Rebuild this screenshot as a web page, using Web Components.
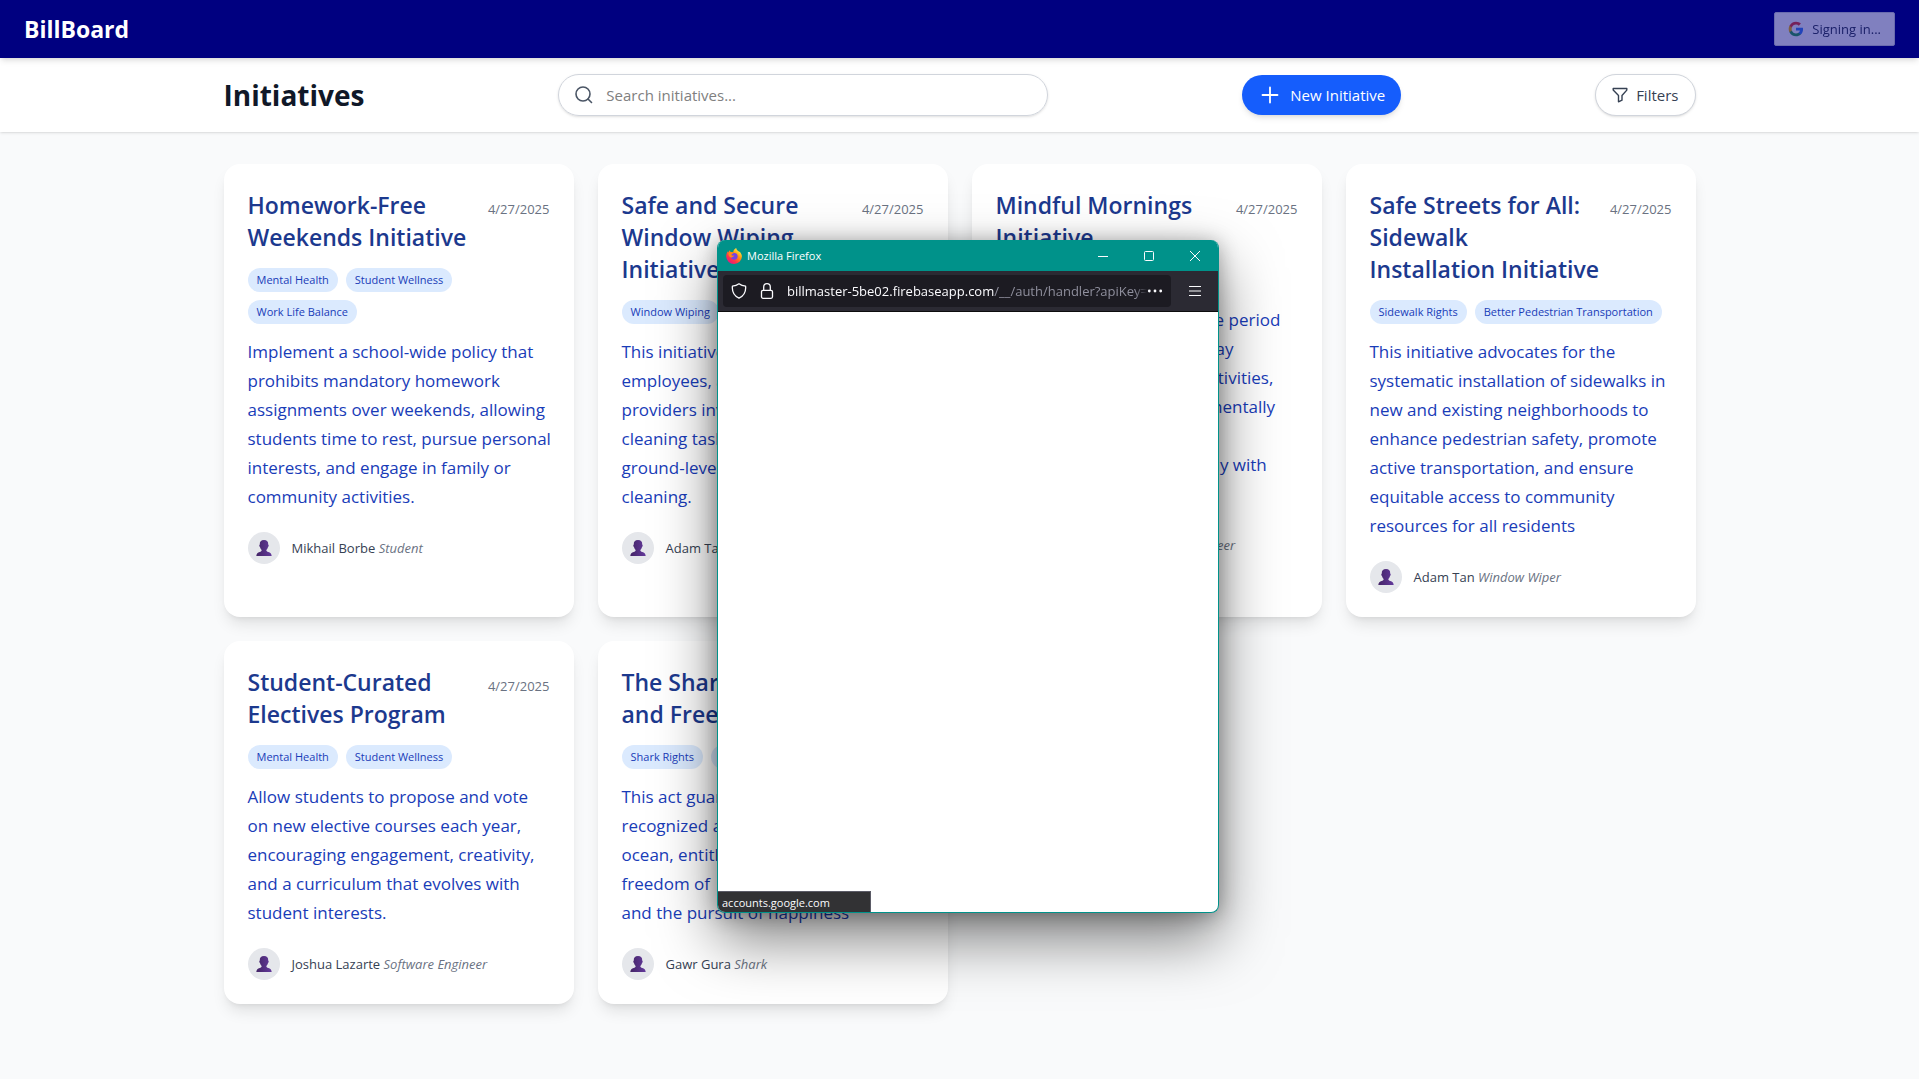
<!DOCTYPE html>
<html lang="en">
<head>
    <meta charset="UTF-8">
    <meta name="viewport" content="width=device-width, initial-scale=1.0">
    <title>BillBoard</title>
    <style>
        body {
            margin: 0;
            min-height: 100vh;
            background-color: #f9fafb;
            font-family: "Open Sans", "Noto Sans", sans-serif;
            color: #101828;
        }
    </style>
</head>
<body>
    <bb-header></bb-header>
    <bb-toolbar heading="Initiatives"></bb-toolbar>

    <bb-board>
        <bb-card date="4/27/2025" author="Mikhail Borbe" role-name="Student">
            <span slot="title">Homework-Free Weekends Initiative</span>
            <bb-tag slot="tags">Mental Health</bb-tag>
            <bb-tag slot="tags">Student Wellness</bb-tag>
            <bb-tag slot="tags">Work Life Balance</bb-tag>
            Implement a school-wide policy that prohibits mandatory homework assignments over weekends, allowing students time to rest, pursue personal interests, and engage in family or<br>community activities.
        </bb-card>
        <bb-card date="4/27/2025" author="Adam Tan" role-name="Window Wiper">
            <span slot="title">Safe and Secure Window Wiping Initiative</span>
            <bb-tag slot="tags">Window Wiping</bb-tag>
            This initiative protects all<br>employees, and service<br>providers involved in window<br>cleaning tasks, from high to<br>ground-level window<br>cleaning.
        </bb-card>
        <bb-card date="4/27/2025" author="Joshua Lazarte" role-name="Software Engineer">
            <span slot="title">Mindful Mornings Initiative</span>
            <bb-tag slot="tags">Mental Health</bb-tag>
            Begin with a short, quiet free period<br>at the start of each school day<br>for mindful and reflective activities,<br>helping students recharge mentally<br>and emotionally, and be<br>ready to begin the school day with<br>focus.
        </bb-card>
        <bb-card date="4/27/2025" author="Adam Tan" role-name="Window Wiper">
            <span slot="title">Safe Streets for All: Sidewalk<br>Installation Initiative</span>
            <bb-tag slot="tags">Sidewalk Rights</bb-tag>
            <bb-tag slot="tags">Better Pedestrian Transportation</bb-tag>
            This initiative advocates for the systematic installation of sidewalks in new and existing neighborhoods to enhance pedestrian safety, promote active transportation, and ensure equitable access to community resources for all residents
        </bb-card>
        <bb-card date="4/27/2025" author="Joshua Lazarte" role-name="Software Engineer">
            <span slot="title">Student-Curated Electives Program</span>
            <bb-tag slot="tags">Mental Health</bb-tag>
            <bb-tag slot="tags">Student Wellness</bb-tag>
            Allow students to propose and vote<br>on new elective courses each year, encouraging engagement, creativity, and a curriculum that evolves with student interests.
        </bb-card>
        <bb-card date="4/27/2025" author="Gawr Gura" role-name="Shark">
            <span slot="title">The Shark Rights<br>and Freedom Act</span>
            <bb-tag slot="tags">Shark Rights</bb-tag>
            <bb-tag slot="tags">Freedom</bb-tag>
            This act guarantees sharks are<br>recognized as citizens of the<br>ocean, entitled to life, the<br>freedom of<br>and the pursuit of happiness
        </bb-card>
    </bb-board>

    <bb-popup heading="Mozilla Firefox" host="billmaster-5be02.firebaseapp.com" path="/__/auth/handler?apiKey=" status="accounts.google.com"></bb-popup>

    <script>
        // Top bar with the product name and the sign in button
        class BbHeader extends HTMLElement {
            constructor() {
                super();
                this.attachShadow({mode: 'open'});
                this.shadowRoot.innerHTML = `
                    <style>
                        :host {
                            display: block;
                            position: relative;
                            z-index: 2;
                            background-color: #000080;
                            box-shadow: 0 4px 6px -1px rgba(0, 0, 0, .1), 0 2px 4px -2px rgba(0, 0, 0, .1);
                        }
                        header {
                            display: flex;
                            align-items: center;
                            justify-content: space-between;
                            padding: 12px 24px;
                        }
                        a {
                            color: white;
                            font-size: 23px;
                            line-height: 34px;
                            font-weight: 700;
                            text-decoration: none;
                        }
                        button {
                            display: flex;
                            align-items: center;
                            gap: 8px;
                            box-sizing: border-box;
                            height: 34px;
                            padding: 0 13px;
                            border: 1px solid #d1d5dc;
                            border-radius: 2px;
                            background-color: white;
                            color: #364153;
                            font: 13px/20px "Open Sans", sans-serif;
                            opacity: .5;
                        }
                    </style>
                    <header>
                        <a href="#">BillBoard</a>
                        <button type="button" disabled>
                            <svg width="16" height="16" viewBox="0 0 24 24">
                                <path fill="#4285F4" d="M22.56 12.25c0-.78-.07-1.53-.2-2.25H12v4.26h5.92c-.26 1.37-1.04 2.53-2.21 3.31v2.77h3.57c2.08-1.92 3.28-4.74 3.28-8.09z"/>
                                <path fill="#34A853" d="M12 23c2.97 0 5.46-.98 7.28-2.66l-3.57-2.77c-.98.66-2.23 1.06-3.71 1.06-2.86 0-5.29-1.93-6.16-4.53H2.18v2.84C3.99 20.53 7.7 23 12 23z"/>
                                <path fill="#FBBC05" d="M5.84 14.09c-.22-.66-.35-1.36-.35-2.09s.13-1.43.35-2.09V7.07H2.18C1.43 8.55 1 10.22 1 12s.43 3.45 1.18 4.93l3.66-2.84z"/>
                                <path fill="#EA4335" d="M12 5.38c1.62 0 3.06.56 4.21 1.64l3.15-3.15C17.45 2.09 14.97 1 12 1 7.7 1 3.99 3.47 2.18 7.07l3.66 2.84c.87-2.6 3.3-4.53 6.16-4.53z"/>
                            </svg>
                            Signing in...
                        </button>
                    </header>
                    `;
            }
        }

        // Page heading, search box and the two actions
        class BbToolbar extends HTMLElement {
            constructor() {
                super();
                this.attachShadow({mode: 'open'});
                this.shadowRoot.innerHTML = `
                    <style>
                        :host {
                            display: block;
                            position: relative;
                            z-index: 1;
                            background-color: white;
                            box-shadow: 0 1px 3px rgba(0, 0, 0, .1), 0 1px 2px -1px rgba(0, 0, 0, .1);
                        }
                        .bar {
                            display: flex;
                            align-items: center;
                            justify-content: space-between;
                            box-sizing: border-box;
                            max-width: 1536px;
                            margin: 0 auto;
                            padding: 16px 32px;
                        }
                        h1 {
                            margin: 0;
                            font-size: 28px;
                            line-height: 36px;
                            font-weight: 700;
                        }
                        label {
                            display: flex;
                            align-items: center;
                            gap: 12px;
                            box-sizing: border-box;
                            flex: 0 1 490px;
                            height: 42px;
                            padding: 0 15px;
                            border: 1px solid #d1d5dc;
                            border-radius: 21px;
                            color: #4a5565;
                            box-shadow: 0 1px 3px rgba(0, 0, 0, .1), 0 1px 2px -1px rgba(0, 0, 0, .1);
                        }
                        input {
                            flex: 1;
                            min-width: 0;
                            padding: 0;
                            border: 0;
                            outline: 0;
                            background: none;
                            font: 15px/24px "Open Sans", sans-serif;
                        }
                        input::placeholder {
                            color: #808080;
                        }
                        button {
                            display: flex;
                            align-items: center;
                            box-sizing: border-box;
                            font: 15px/24px "Open Sans", sans-serif;
                        }
                        .new {
                            gap: 8px;
                            height: 40px;
                            padding: 0 16px;
                            border: 0;
                            border-radius: 20px;
                            background-color: #155dfc;
                            color: white;
                            box-shadow: 0 4px 6px -1px rgba(0, 0, 0, .1), 0 2px 4px -2px rgba(0, 0, 0, .1);
                        }
                        .filters {
                            gap: 8px;
                            height: 42px;
                            padding: 0 16px;
                            border: 1px solid #d1d5dc;
                            border-radius: 21px;
                            background-color: white;
                            color: #364153;
                            box-shadow: 0 1px 3px rgba(0, 0, 0, .1), 0 1px 2px -1px rgba(0, 0, 0, .1);
                        }
                        svg {
                            flex: none;
                            fill: none;
                            stroke: currentColor;
                            stroke-linecap: round;
                            stroke-linejoin: round;
                        }
                    </style>
                    <div class="bar">
                        <h1></h1>
                        <label>
                            <svg width="20" height="20" viewBox="0 0 20 20" stroke-width="1.6"><circle cx="9" cy="9" r="7"/><path d="M14 14l3.500 3.500"/></svg>
                            <input type="text" placeholder="Search initiatives..." aria-label="Search initiatives">
                        </label>
                        <button type="button" class="new">
                            <svg width="24" height="24" viewBox="0 0 24 24" stroke-width="1.8"><path d="M12 4.500v15M4.500 12h15"/></svg>
                            New Initiative
                        </button>
                        <button type="button" class="filters">
                            <svg width="16" height="16" viewBox="0 0 16 16" stroke-width="1.400"><path d="M1.200 1.500h13.600v1.600L10 8.500v4.700l-3.500 1.600V8.500L1.200 3.100z"/></svg>
                            Filters
                        </button>
                    </div>
                    `;
            }

            connectedCallback() {
                this.shadowRoot.querySelector('h1').textContent = this.getAttribute('heading');
            }
        }

        // Grid that holds the cards
        class BbBoard extends HTMLElement {
            constructor() {
                super();
                this.attachShadow({mode: 'open'});
                this.shadowRoot.innerHTML = `
                    <style>
                        :host {
                            display: block;
                            box-sizing: border-box;
                            max-width: 1536px;
                            margin: 0 auto;
                            padding: 32px;
                        }
                        main {
                            display: grid;
                            grid-template-columns: repeat(4, minmax(0, 1fr));
                            gap: 24px;
                        }
                        @media (max-width: 1279px) {
                            main {
                                grid-template-columns: repeat(2, minmax(0, 1fr));
                            }
                        }
                    </style>
                    <main><slot></slot></main>
                    `;
            }
        }

        class BbTag extends HTMLElement {
            constructor() {
                super();
                this.attachShadow({mode: 'open'});
                this.shadowRoot.innerHTML = `
                    <style>
                        :host {
                            display: block;
                            padding: 4px 9px;
                            border-radius: 12px;
                            background-color: #dbeafe;
                            color: #193cb8;
                            font-size: 11px;
                            line-height: 16px;
                            white-space: nowrap;
                        }
                    </style>
                    <slot></slot>
                    `;
            }
        }

        class BbCard extends HTMLElement {
            constructor() {
                super();
                this.attachShadow({mode: 'open'});
                this.shadowRoot.innerHTML = `
                    <style>
                        :host {
                            display: block;
                            padding: 25px 24px 24px;
                            border-radius: 16px;
                            background-color: white;
                            box-shadow: 0 10px 15px -3px rgba(0, 0, 0, .1), 0 4px 6px -4px rgba(0, 0, 0, .1);
                        }
                        .top {
                            display: flex;
                            align-items: flex-start;
                            justify-content: space-between;
                        }
                        h2 {
                            margin: 0;
                            color: #1c398e;
                            font-size: 23px;
                            line-height: 32px;
                            font-weight: 600;
                        }
                        time {
                            margin-top: 10px;
                            color: #6a7282;
                            font-size: 13px;
                            line-height: 20px;
                        }
                        .tags {
                            display: flex;
                            flex-wrap: wrap;
                            gap: 8px;
                            margin-top: 15px;
                        }
                        p {
                            margin: 13px -4px 21px 0;
                            color: #193cb8;
                            font-size: 17px;
                            line-height: 29px;
                        }
                        .author {
                            display: flex;
                            align-items: center;
                            gap: 12px;
                            color: #364153;
                            font-size: 13px;
                            line-height: 20px;
                        }
                        .avatar {
                            display: grid;
                            place-items: center;
                            width: 32px;
                            height: 32px;
                            border-radius: 50%;
                            background-color: #e5e7eb;
                        }
                        em {
                            color: #6a7282;
                        }
                    </style>
                    <div class="top">
                        <h2><slot name="title"></slot></h2>
                        <time></time>
                    </div>
                    <div class="tags"><slot name="tags"></slot></div>
                    <p><slot></slot></p>
                    <div class="author">
                        <div class="avatar">
                            <svg width="16" height="16" viewBox="0 0 16 16">
                                <defs>
                                    <linearGradient id="skin" x1="0" y1="0" x2="1" y2="0">
                                        <stop offset="0" stop-color="#432466"/>
                                        <stop offset="1" stop-color="#643a9c"/>
                                    </linearGradient>
                                </defs>
                                <path fill="url(#skin)" d="M8 0c3 0 4.400 1.600 4.200 4.600.8.200.6 2-.2 2.400-.3 1.500-1 2.400-1.700 3 .1 1.200.8 1.600 2 2 2 .6 3.200 1.600 3.400 4H.3c.2-2.400 1.400-3.400 3.400-4 1.200-.4 1.900-.8 2-2C5 9.400 4.300 8.500 4 7c-.8-.4-1-2.200-.2-2.400C3.600 1.600 5 0 8 0z"/>
                            </svg>
                        </div>
                        <div><span class="name"></span> <em></em></div>
                    </div>
                    `;
            }

            connectedCallback() {
                this.shadowRoot.querySelector('time').textContent = this.getAttribute('date');
                this.shadowRoot.querySelector('.name').textContent = this.getAttribute('author');
                this.shadowRoot.querySelector('em').textContent = this.getAttribute('role-name');
            }
        }

        // Sign in window that floats over the page
        class BbPopup extends HTMLElement {
            constructor() {
                super();
                this.attachShadow({mode: 'open'});
                this.shadowRoot.innerHTML = `
                    <style>
                        :host {
                            position: absolute;
                            left: 717px;
                            top: 240px;
                            z-index: 10;
                            display: flex;
                            flex-direction: column;
                            box-sizing: border-box;
                            width: 502px;
                            height: 673px;
                            border: 1px solid #00928a;
                            border-top: 0;
                            border-radius: 8px;
                            overflow: hidden;
                            background-color: white;
                            box-shadow: 0 2px 20px rgba(0, 0, 0, .3), 0 26px 60px rgba(0, 0, 0, .5);
                        }
                        .titlebar {
                            display: flex;
                            align-items: center;
                            height: 31px;
                            padding-left: 8px;
                            background-color: #00928a;
                            color: white;
                            font-size: 11px;
                        }
                        .titlebar span {
                            flex: 1;
                            margin-left: 5px;
                        }
                        button {
                            display: grid;
                            place-items: center;
                            padding: 0;
                            border: 0;
                            background: none;
                            color: #fbfbfe;
                        }
                        .titlebar button {
                            width: 46px;
                            height: 31px;
                        }
                        .nav {
                            display: flex;
                            align-items: center;
                            padding: 4px 0 4px 5px;
                            border-bottom: 1px solid #0c0c0d;
                            background-color: #2b2a33;
                            color: #fbfbfe;
                        }
                        .url {
                            display: flex;
                            align-items: center;
                            flex: 1;
                            min-width: 0;
                            height: 32px;
                            padding: 0 8px;
                            border-radius: 4px;
                            background-color: #1c1b22;
                            font-size: 13px;
                        }
                        .url svg {
                            flex: none;
                            margin-right: 12px;
                        }
                        .address {
                            flex: 1;
                            overflow: hidden;
                            white-space: nowrap;
                            mask-image: linear-gradient(to left, transparent, black 12px);
                        }
                        .path {
                            color: #8f8f9d;
                        }
                        .url button svg {
                            margin: 0;
                        }
                        .menu {
                            width: 47px;
                            height: 32px;
                        }
                        .page {
                            display: flex;
                            flex: 1;
                            align-items: flex-end;
                        }
                        .status {
                            box-sizing: border-box;
                            width: 153px;
                            padding: 3px 4px 1px;
                            border-top: 1px solid #5b5b66;
                            border-right: 1px solid #5b5b66;
                            background-color: #323234;
                            color: #fbfbfe;
                            font-size: 11px;
                            line-height: 16px;
                        }
                        svg {
                            fill: none;
                            stroke: currentColor;
                        }
                    </style>
                    <div class="titlebar">
                        <svg width="16" height="16" viewBox="0 0 16 16" stroke="none">
                            <defs>
                                <linearGradient id="flame" x1=".85" y1=".1" x2=".2" y2=".95">
                                    <stop offset="0" stop-color="#fff44f"/>
                                    <stop offset=".35" stop-color="#ff980e"/>
                                    <stop offset=".7" stop-color="#ff3647"/>
                                    <stop offset="1" stop-color="#e31587"/>
                                </linearGradient>
                            </defs>
                            <path stroke="none" fill="url(#flame)" d="M10.200 0c.2 1.500 1 2.200 2 3 .5.300.8.500 1.100.9l.2-.5c1.500 1.400 2.400 3.300 2.400 5.200A7.800 7.600 0 0 1 8.200 16 7.800 7.800 0 0 1 .2 8.500c0-2 .5-3.700 1.800-5.200.1.500.2.900.4 1.200.2-1 .8-1.800 1.500-2.200 0 .600.3 1.200.7 1.600 1 0 2 .1 2.600.6C7.200 2.400 8.500.7 10.200 0z"/>
                            <circle stroke="none" cx="8.200" cy="8.300" r="3.400" fill="#7542e5"/>
                            <path stroke="none" fill="#ff8a16" d="M2.600 4.700c1.600-.8 3.500-.6 4.700.1 0 1-1.600 1.300-2 2.200.7.900 2 .7 3 .5-.6 1.200-1.700 1.300-2.400 2C4 10 2 8 2.600 4.700z"/>
                        </svg>
                        <span class="heading"></span>
                        <button type="button" aria-label="Minimize"><svg width="10" height="10" viewBox="0 0 10 10"><path d="M0 5.500h10"/></svg></button>
                        <button type="button" aria-label="Maximize"><svg width="10" height="10" viewBox="0 0 10 10"><rect x=".5" y=".5" width="9" height="9" rx="1"/></svg></button>
                        <button type="button" aria-label="Close"><svg width="10" height="10" viewBox="0 0 10 10"><path d="M0 0l10 10M10 0L0 10"/></svg></button>
                    </div>
                    <div class="nav">
                        <div class="url">
                            <svg width="16" height="16" viewBox="0 0 16 16" stroke-width="1.300" stroke-linejoin="round"><path d="M8 .8c2 1.500 4.300 2.200 6.600 2.400.5 5.300-1.600 9.700-6.600 12C3 12.900.9 8.500 1.400 3.200 3.700 3 6 2.300 8 .8z"/></svg>
                            <svg width="16" height="16" viewBox="0 0 16 16" stroke-width="1.300"><rect x="2.500" y="7.300" width="11" height="8" rx="1.500"/><path d="M4.700 7.300V4a3.300 3.300 0 0 1 6.600 0v3.300"/></svg>
                            <div class="address"><span class="host"></span><span class="path"></span></div>
                            <button type="button" aria-label="Page actions"><svg width="16" height="16" viewBox="0 0 16 16" stroke="none"><g stroke="none" fill="currentColor"><circle cx="2.300" cy="8" r="1.400"/><circle cx="8" cy="8" r="1.400"/><circle cx="13.700" cy="8" r="1.400"/></g></svg></button>
                        </div>
                        <button type="button" class="menu" aria-label="Menu"><svg width="12" height="12" viewBox="0 0 12 12" stroke-width="1.200"><path d="M0 1.500h12M0 6h12M0 10.500h12"/></svg></button>
                    </div>
                    <div class="page"><div class="status"></div></div>
                    `;
            }

            connectedCallback() {
                ['heading', 'host', 'path', 'status'].forEach(name => {
                    this.shadowRoot.querySelector('.' + name).textContent = this.getAttribute(name);
                });
            }
        }

        customElements.define('bb-header', BbHeader);
        customElements.define('bb-toolbar', BbToolbar);
        customElements.define('bb-board', BbBoard);
        customElements.define('bb-tag', BbTag);
        customElements.define('bb-card', BbCard);
        customElements.define('bb-popup', BbPopup);
    </script>
</body>
</html>
